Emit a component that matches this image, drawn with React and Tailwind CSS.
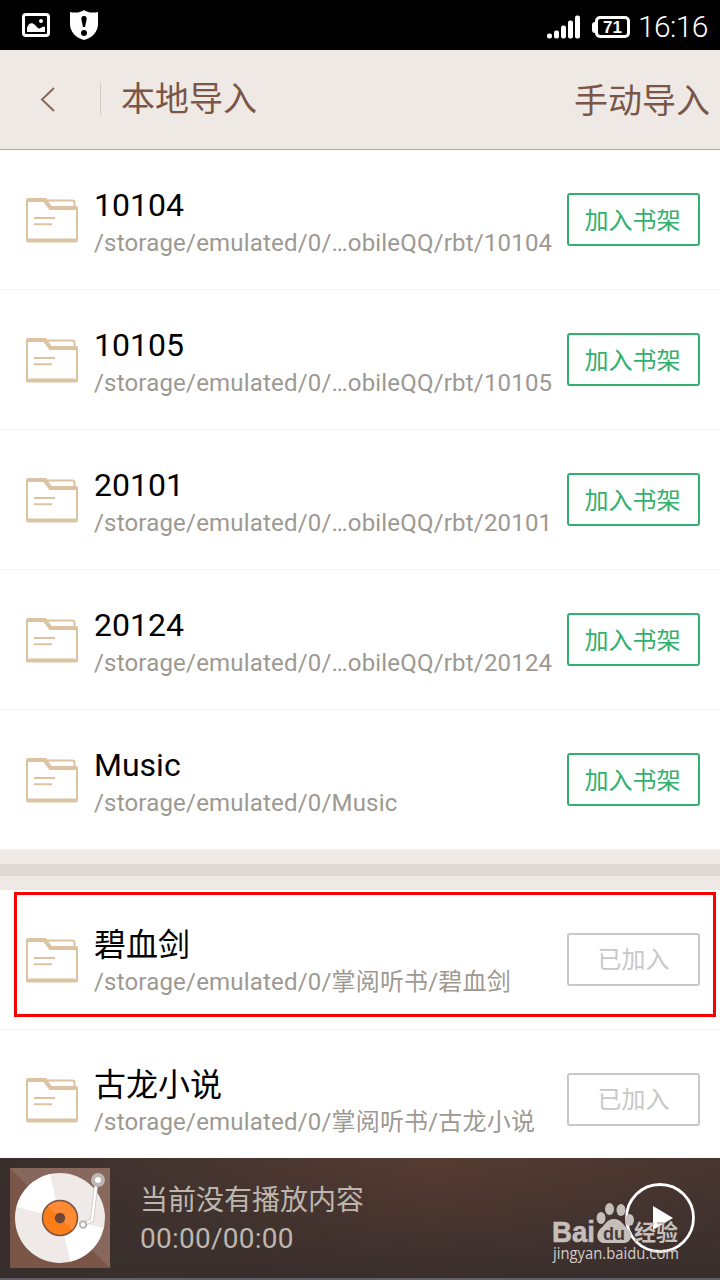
const folders = [
  { name: '10104', path: '/storage/emulated/0/…obileQQ/rbt/10104' },
  { name: '10105', path: '/storage/emulated/0/…obileQQ/rbt/10105' },
  { name: '20101', path: '/storage/emulated/0/…obileQQ/rbt/20101' },
  { name: '20124', path: '/storage/emulated/0/…obileQQ/rbt/20124' },
  { name: 'Music', path: '/storage/emulated/0/Music' },
]

const addedFolders = [
  { name: '碧血剑', path: '/storage/emulated/0/掌阅听书/碧血剑', highlighted: true },
  { name: '古龙小说', path: '/storage/emulated/0/掌阅听书/古龙小说' },
]

function StatusBar() {
  return (
    <div className="flex h-[50px] items-center bg-black text-white">
      <svg className="ml-[22px] shrink-0" width="28" height="26" viewBox="0 0 28 26">
        <rect x="1.5" y="2.5" width="25" height="21" rx="2.5" fill="none" stroke="white" strokeWidth="3" />
        <path d="M5 20V16C6 11.500 10 9.500 13 13L16 16C18 18 19.500 13.500 23 15V20Z" fill="white" />
        <circle cx="19" cy="9" r="2" fill="white" />
      </svg>
      <svg className="ml-5 shrink-0" width="28" height="30" viewBox="0 0 28 30">
        <path d="M14 0C16 2 22 3.500 28 2V14C28 22 22 28 14 30C6 28 0 22 0 14V2C6 3.500 12 2 14 0Z" fill="white" />
        <path d="M14 6C16.500 6 17 8 16.500 10L15 17H13L11.500 10C11 8 11.500 6 14 6Z" fill="black" />
        <circle cx="14" cy="23" r="3" fill="black" />
      </svg>
      <svg className="mt-[3px] ml-auto shrink-0" width="33" height="24" viewBox="0 0 33 24" fill="white">
        <rect x="0" y="18.500" width="5" height="5" rx="2" />
        <rect x="7" y="15.500" width="5" height="8" rx="2" />
        <rect x="14" y="10.500" width="5" height="13" rx="2" />
        <rect x="21" y="5.500" width="5" height="18" rx="2" />
        <rect x="28" y="0.500" width="5" height="23" rx="2" />
      </svg>
      <div className="ml-3 flex items-center pt-1">
        <div className="h-[11px] w-[3px] rounded-l-sm bg-white" />
        <div className="flex h-[22px] w-[35px] items-center justify-center rounded-[5px] border-3 border-white font-['Liberation_Sans',sans-serif] text-[17px] leading-none font-bold">
          71
        </div>
      </div>
      <span className="mr-3 ml-2 w-[70px] pt-[4px] font-['Roboto',sans-serif] text-[30px] leading-10 font-light tracking-[-0.6px] whitespace-nowrap">
        16:16
      </span>
    </div>
  )
}

function Header() {
  return (
    <header className="flex h-[100px] items-start border-b border-[#b8a48c] bg-[#eee9e5] text-[34px] leading-10 text-[#7b5648]">
      <svg className="mt-[37px] ml-[40px] shrink-0" width="15" height="25" viewBox="0 0 15 25">
        <path d="M14 1L2 12.500L14 24" fill="none" stroke="#87685b" strokeWidth="2" />
      </svg>
      <div className="mt-[33px] ml-[45px] h-8 w-px bg-[#d5cac4]" />
      <h1 className="mt-[29px] ml-[20px]">本地导入</h1>
      <span className="mt-[31px] mr-[10px] ml-auto">手动导入</span>
    </header>
  )
}

function FolderIcon() {
  return (
    <svg className="mt-[47px] ml-[26px] shrink-0" width="52" height="46" viewBox="0 0 52 46" fill="none" stroke="#dcc4a3">
      <path d="M20 3.500H46.500Q48.500 3.500 48.500 5.500V9" strokeWidth="2" />
      <path d="M1 43V3" strokeWidth="2" />
      <path d="M51 10V43" strokeWidth="2" />
      <path d="M2 1H20L25.500 9H50Q52 9 52 11V13H23.500L17.500 5H0V3Q0 1 2 1Z" fill="#dcc4a3" stroke="none" />
      <path d="M0 41.500H52V43.500Q52 45.500 50 45.500H2Q0 45.500 0 43.500Z" fill="#dcc4a3" stroke="none" />
      <path d="M8 21H29M8 27.300H26" strokeWidth="2" />
    </svg>
  )
}

function FolderRow({ folder, added }) {
  return (
    <li className="relative flex h-[140px] items-start border-b border-[#f3f3f3]">
      {folder.highlighted && (
        <div className="absolute top-[2px] left-[14px] h-[125px] w-[702px] border-3 border-[#fb0000]" />
      )}
      <FolderIcon />
      <div className="ml-[16px] flex-1 pt-[35px] whitespace-nowrap">
        <div className="text-[32px] leading-10 text-black">{folder.name}</div>
        <div
          className={`text-[24px] leading-8 tracking-[0.19px] text-[#9d9992] ${added ? 'mt-px' : 'mt-[2px]'}`}
        >
          {folder.path}
        </div>
      </div>
      <button
        className={`mt-[43px] mr-5 h-[53px] w-[133px] shrink-0 rounded-[3px] border-2 text-[24px] leading-none ${
          added ? 'border-[#c8c8c8] text-[#c8c8c8]' : 'border-[#33b06d] pt-[2px] pr-[2px] text-[#33b06d]'
        }`}
      >
        {added ? '已加入' : '加入书架'}
      </button>
    </li>
  )
}

function RecordCover() {
  return (
    <svg className="mt-[10px] ml-[10px] shrink-0" width="100" height="100" viewBox="0 0 100 100">
      <rect width="100" height="100" fill="#7a5548" />
      <path d="M0 0H100V100Z" fill="#88675c" />
      <circle cx="50" cy="50" r="45" fill="#efeae7" />
      <path d="M50 50L6.500 39A45 45 0 0 1 40 6Z" fill="white" />
      <path d="M50 50L93.500 60A45 45 0 0 1 60.500 93.500Z" fill="white" />
      <circle cx="50" cy="50" r="17.500" fill="#fb7d18" stroke="#795548" strokeWidth="1.500" />
      <path d="M38 38A17 17 0 0 1 62 62Z" fill="#ff8c35" />
      <circle cx="50" cy="50" r="5.200" fill="#6d4638" />
      <path d="M86 18L82 52L75 56" fill="none" stroke="#c9c4c0" strokeWidth="4" />
      <path d="M86 18L82 52L75 56" fill="none" stroke="white" strokeWidth="2.500" />
      <circle cx="88" cy="12" r="5" fill="white" stroke="#bcb7b2" strokeWidth="4" />
      <circle cx="73" cy="56.500" r="3.200" fill="white" stroke="#bcb7b2" strokeWidth="2" />
    </svg>
  )
}

function Watermark() {
  return (
    <div className="absolute top-[43px] left-[552px] h-[74px] w-[130px]">
      <svg width="130" height="74" viewBox="0 0 130 74" fill="#c5beba">
        <ellipse cx="49" cy="17" rx="4.500" ry="6" />
        <ellipse cx="57.500" cy="8" rx="4.500" ry="6" />
        <ellipse cx="69" cy="9" rx="4.500" ry="6" />
        <ellipse cx="77.500" cy="19" rx="4.500" ry="6" />
        <path d="M62 18C69 18 71 24 76 28C82 34 79 43 70 42H54C45 43 43 34 48 28C53 24 55 18 62 18Z" />
        <text x="0" y="41" fontFamily="Liberation Sans" fontSize="29" fontWeight="700" textLength="43" lengthAdjust="spacingAndGlyphs" stroke="#c5beba" strokeWidth="0.6">Bai</text>
        <text x="51" y="39" fontFamily="Liberation Sans" fontSize="18" fontWeight="700" fill="#4b3933">du</text>
        <text x="82" y="39" fontFamily="Noto Sans CJK SC" fontSize="22" fontWeight="700">经验</text>
        <text x="1" y="58" fontFamily="Open Sans" fontSize="15.500" textLength="126" lengthAdjust="spacingAndGlyphs" fill="#d2cdca">jingyan.baidu.com</text>
      </svg>
    </div>
  )
}

function Player() {
  return (
    <footer className="relative flex h-[122px] items-start border-b-2 border-[#626066] bg-linear-to-b from-[#573c32] to-[#3a2e2c]">
      <div className="absolute inset-0 bg-linear-to-r from-[#382f2d] via-transparent via-60% to-[#382f2d]/50" />
      <div className="relative flex w-full items-start">
        <RecordCover />
        <div className="ml-[30px] pt-6 text-[#bdb6af]">
          <div className="text-[28px] leading-[38px]">当前没有播放内容</div>
          <div className="text-[28px] leading-[38px] tracking-[0.25px]">00:00/00:00</div>
        </div>
        <svg className="mt-[24px] mr-[24px] ml-auto shrink-0" width="72" height="72" viewBox="0 0 72 72">
          <circle cx="36" cy="36" r="33.500" fill="none" stroke="white" strokeWidth="2.800" />
          <path d="M29 24L49 36L29 48Z" fill="white" />
        </svg>
      </div>
      <Watermark />
    </footer>
  )
}

export default function App() {
  return (
    <div className="flex h-[1280px] w-[720px] flex-col overflow-hidden bg-white font-['Roboto','Noto_Sans_CJK_SC',sans-serif]">
      <StatusBar />
      <Header />
      <main className="h-[1008px] overflow-hidden">
        <ul>
          {folders.map((folder) => (
            <FolderRow key={folder.name} folder={folder} />
          ))}
        </ul>
        <div className="flex h-10 flex-col justify-center bg-[#eee9e5]">
          <div className="h-3 border-y border-[#dcd5d0] bg-[#e0d8d3]" />
        </div>
        <ul>
          {addedFolders.map((folder) => (
            <FolderRow key={folder.name} folder={folder} added />
          ))}
        </ul>
      </main>
      <Player />
    </div>
  )
}
